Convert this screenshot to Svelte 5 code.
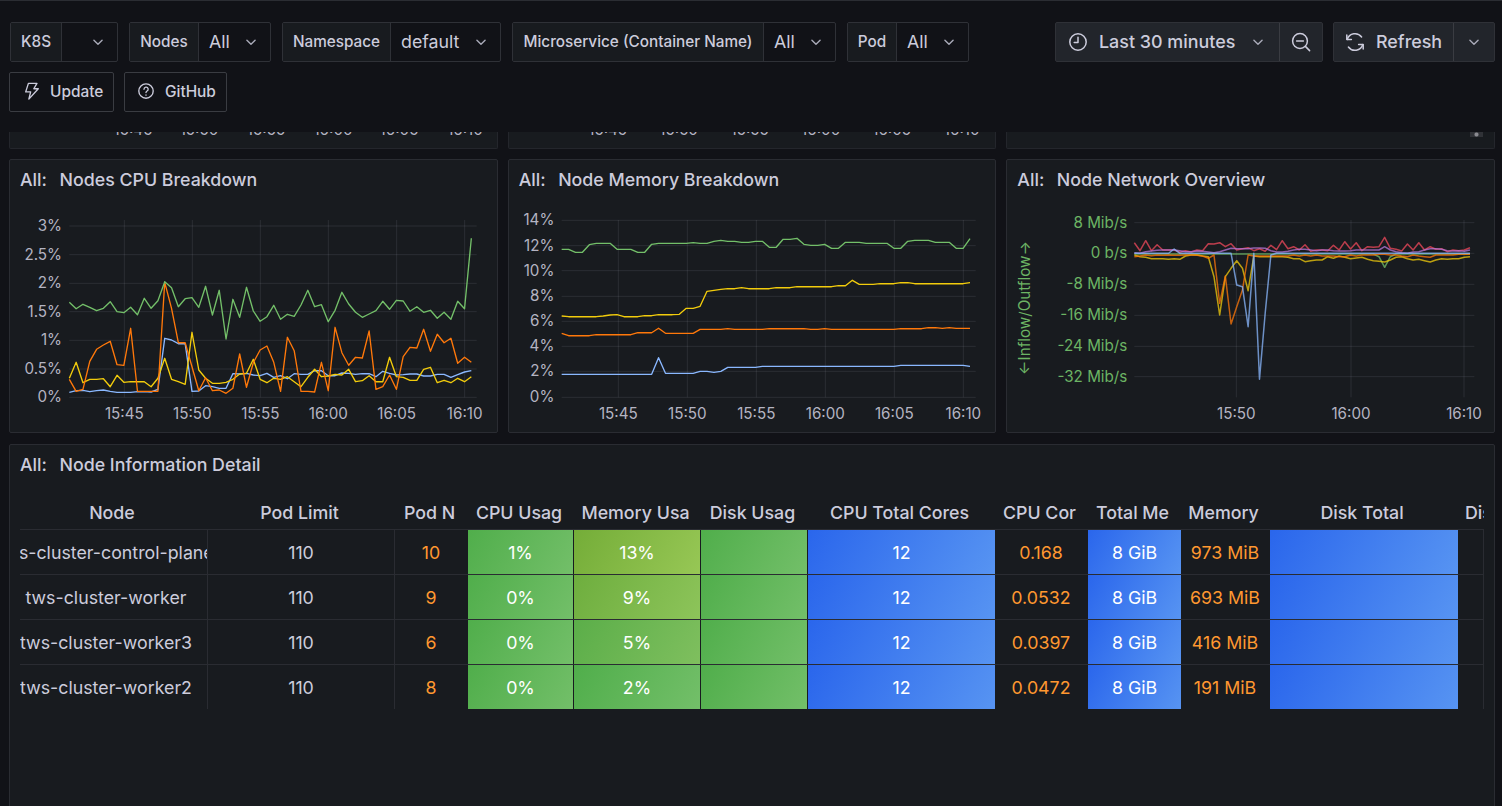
<script>
  // series are read off the reference in 3x crop coordinates, toLine maps them to svg space
  const toLine = (ys, x0, x1, ox) =>
    ys.map((y, i) => `${(x0 + (i * (x1 - x0)) / (ys.length - 1)) / 3 - ox},${(y / 3).toFixed(1)}`).join(' ');
  const rep = (v, n) => Array(n).fill(v);

  const variables = [
    { id: 'k8s', label: 'K8S', value: '' },
    { id: 'nodes', label: 'Nodes', value: 'All' },
    { id: 'ns', label: 'Namespace', value: 'default' },
    { id: 'micro', label: 'Microservice (Container Name)', value: 'All' },
    { id: 'pod', label: 'Pod', value: 'All' }
  ];

  const times = ['15:45', '15:50', '15:55', '16:00', '16:05', '16:10'];

  // chart 1
  const cpuGrid = [78, 164, 250, 335, 421, 507, 592];
  const cpuTicks = ['3%', '2.5%', '2%', '1.5%', '1%', '0.5%', '0%'];
  const cpuX = [373, 577, 781, 985, 1190, 1394];
  const cpuSeries = [
    { c: '#8ab8ff', y: [577,572,571,575,572,570,574,577,577,577,575,575,576,568,415,420,431,431,574,573,557,560,565,565,521,522,520,525,527,520,532,527,536,521,523,523,512,512,527,527,519,520,523,521,521,530,514,520,525,524,522,522,528,528,523,523,532,524,516,512] },
    { c: '#f2cc0c', y: [535,487,548,538,538,536,560,526,547,545,545,545,560,535,475,538,545,553,397,510,535,550,550,547,538,522,520,478,538,548,535,538,530,545,560,532,508,530,528,523,525,508,545,542,527,545,545,472,530,532,541,541,508,502,548,541,548,535,545,530] },
    { c: '#ff780a', y: [538,574,568,484,448,435,424,494,496,385,574,574,574,574,247,325,428,428,500,572,533,572,570,580,565,462,562,488,450,438,487,574,412,452,574,574,576,487,572,382,458,496,472,474,393,568,560,525,568,470,442,444,388,454,403,428,415,490,472,487] },
    { c: '#73bf69', y: [307,326,313,322,332,325,305,335,338,322,344,295,325,302,245,263,320,296,293,322,259,345,271,417,298,352,262,333,364,350,316,358,343,349,315,271,320,314,365,331,277,312,337,352,342,332,304,328,301,303,334,320,337,331,355,337,358,304,326,115] }
  ];

  // chart 2
  const memGrid = [61, 137, 212, 289, 364, 439, 514, 592];
  const memTicks = ['14%', '12%', '10%', '8%', '6%', '4%', '2%', '0%'];
  const memX = [340, 547, 754, 961, 1168, 1375];
  const memSeries = [
    { c: '#8ab8ff', y: [...rep(523, 14), 473, 520, 520, 520, 520, 520, 514, 514, 517, 514, ...rep(502, 5), ...rep(499, 20), ...rep(496, 10), 499] },
    { c: '#ff780a', y: [400,407,407,407,407,404,404,404,404,404,404,398,398,398,385,400,400,400,400,400,388,388,388,388,386,388,388,388,388,388,386,386,386,386,386,386,388,388,386,388,388,388,388,388,388,388,388,388,388,386,386,386,386,383,383,385,383,385,385,385] },
    { c: '#f2cc0c', y: [348,350,350,350,350,350,348,345,344,350,350,350,347,347,344,344,344,343,325,325,319,274,271,268,266,266,263,266,266,266,266,263,263,263,260,260,260,260,260,260,257,257,241,253,253,253,251,251,251,248,248,251,251,251,251,251,251,251,251,248] },
    { c: '#73bf69', y: [148,148,157,157,134,130,130,130,148,148,148,157,157,133,130,130,130,130,130,128,130,130,124,121,124,124,127,127,124,124,142,142,118,118,115,133,136,136,133,145,145,127,127,127,130,130,130,130,145,145,124,121,121,121,127,127,127,145,145,116] }
  ];

  // chart 3
  const netGrid = [68, 160, 253, 346, 439, 530];
  const netTicks = ['8 Mib/s', '0 b/s', '-8 Mib/s', '-16 Mib/s', '-24 Mib/s', '-32 Mib/s'];
  const netX = [694, 1038, 1377];
  const netTimes = ['15:50', '16:00', '16:10'];
  const netBlue = rep(160, 60);
  netBlue[7] = 147;
  netBlue[18] = 255; netBlue[19] = 260; netBlue[20] = 380; netBlue[22] = 538; netBlue[23] = 340; netBlue[24] = 165;
  const netGreen = rep(162, 60);
  netGreen[43] = 170; netGreen[44] = 202; netGreen[45] = 170;
  const netSeries = [
    { c: '#73bf69', y: netGreen },
    { c: '#f2cc0c', y: [165,170,172,176,176,176,178,176,178,168,165,165,168,170,230,345,230,205,182,205,272,168,170,170,170,170,170,172,176,176,185,182,180,180,170,175,168,172,176,174,172,178,182,184,186,180,172,170,176,180,178,182,186,180,176,178,176,176,172,170] },
    { c: '#ff780a', y: [170,168,165,167,165,166,165,166,166,165,165,166,168,175,165,310,228,372,320,270,165,168,168,168,168,168,168,168,165,168,165,168,165,168,168,168,170,170,165,168,165,165,165,163,163,165,165,168,170,165,168,170,172,165,165,165,165,163,163,163] },
    { c: '#f2495c', y: [128,152,122,152,134,150,150,150,157,152,156,150,152,131,132,128,140,131,150,146,143,152,146,154,136,149,122,146,140,150,134,154,150,150,152,136,150,125,147,128,152,140,142,140,112,145,148,153,132,150,128,150,140,148,146,155,150,152,150,143] },
    { c: '#b877d9', y: [158,160,155,153,151,150,150,150,152,155,155,153,154,156,158,155,150,145,146,146,146,144,144,145,152,156,156,154,150,148,148,150,152,150,150,152,153,153,152,150,150,150,150,150,140,150,155,158,160,156,155,150,146,146,148,152,153,152,154,150] },
    { c: '#8ab8ff', y: netBlue }
  ];

  const columns = [
    { key: 'node', title: 'Node', kind: 'text name' },
    { key: 'limit', title: 'Pod Limit', kind: 'text' },
    { key: 'num', title: 'Pod N', kind: 'warn' },
    { key: 'cpu', title: 'CPU Usag', kind: 'green' },
    { key: 'mem', title: 'Memory Usa', kind: 'green' },
    { key: 'disk', title: 'Disk Usag', kind: 'green' },
    { key: 'cores', title: 'CPU Total Cores', kind: 'blue' },
    { key: 'used', title: 'CPU Cor', kind: 'warn' },
    { key: 'total', title: 'Total Me', kind: 'blue' },
    { key: 'memUsed', title: 'Memory', kind: 'warn' },
    { key: 'diskTotal', title: 'Disk Total', kind: 'blue' },
    { key: 'last', title: 'Dis', kind: 'text' }
  ];

  const rows = [
    { node: 'tws-cluster-control-plane', limit: '110', num: '10', cpu: '1%', mem: '13%', tone: 'm13', cores: '12', used: '0.168', total: '8 GiB', memUsed: '973 MiB' },
    { node: 'tws-cluster-worker', limit: '110', num: '9', cpu: '0%', mem: '9%', tone: 'm9', cores: '12', used: '0.0532', total: '8 GiB', memUsed: '693 MiB' },
    { node: 'tws-cluster-worker3', limit: '110', num: '6', cpu: '0%', mem: '5%', tone: 'm5', cores: '12', used: '0.0397', total: '8 GiB', memUsed: '416 MiB' },
    { node: 'tws-cluster-worker2', limit: '110', num: '8', cpu: '0%', mem: '2%', tone: '', cores: '12', used: '0.0472', total: '8 GiB', memUsed: '191 MiB' }
  ];
</script>

{#snippet chevron()}
  <svg class="chev" viewBox="0 0 12 12"><path d="M2.500 4.500 6 8l3.500-3.500" /></svg>
{/snippet}

<div class="page">
  <header class="toolbar">
    <div class="bar-row">
      <div class="vars">
        {#each variables as v}
          <div class="var {v.id}">
            <span class="var-label">{v.label}</span>
            <span class="var-value"><span>{v.value}</span>{@render chevron()}</span>
          </div>
        {/each}
      </div>
      <div class="controls">
        <div class="btn-group">
          <div class="ctl time">
            <svg class="ico" viewBox="0 0 20 20"><circle cx="10" cy="10" r="8.200" /><path d="M10 5.200V10.400H6.200" /></svg>
            <span>Last 30 minutes</span>
            {@render chevron()}
          </div>
          <div class="ctl zoom">
            <svg class="ico" viewBox="0 0 20 20"><circle cx="9" cy="9" r="7.400" /><path d="M5.600 9h6.800M14.400 14.400 18.600 18.600" /></svg>
          </div>
        </div>
        <div class="btn-group">
          <div class="ctl refresh">
            <svg class="ico" viewBox="0 0 20 20"><path d="M1.800 3v4.600h4.600M18.200 17v-4.600h-4.600" /><path d="M2.200 7.400A8.200 8.200 0 0 1 16.600 5M17.800 12.600A8.200 8.200 0 0 1 3.400 15" /></svg>
            <span>Refresh</span>
          </div>
          <div class="ctl more">{@render chevron()}</div>
        </div>
      </div>
    </div>
    <div class="links">
      <div class="link update">
        <svg class="ico small" viewBox="0 0 20 20"><path d="M6 1.500h9.500l-3.500 6h5L6.500 19l2-8H3z" /></svg>
        <span>Update</span>
      </div>
      <div class="link github">
        <svg class="ico small" viewBox="0 0 20 20"><circle cx="10" cy="10" r="8" /><path d="M7.800 8a2.300 2.300 0 1 1 3.400 2c-.8.500-1.200.9-1.200 1.800M10 14.400v.2" /></svg>
        <span>GitHub</span>
      </div>
    </div>
  </header>

  <main class="board">
    <div class="clipped">
      <div class="stub first">
        {#each times as t}<span>{t}</span>{/each}
      </div>
      <div class="stub second">
        {#each times as t}<span>{t}</span>{/each}
      </div>
      <div class="stub third"><i class="handle"></i></div>
    </div>

    <div class="charts">
      <section class="panel">
        <h2><span class="scope">All:</span>Nodes CPU Breakdown</h2>
        <svg class="chart" viewBox="0 0 488 232">
          {#each cpuGrid as y, i}
            <line class="grid" x1={208 / 3 - 10} x2={1430 / 3 - 10} y1={y / 3} y2={y / 3} />
            <text class="tick" text-anchor="end" x={186 / 3 - 10} y={y / 3 + 5}>{cpuTicks[i]}</text>
          {/each}
          {#each cpuX as x, i}
            <line class="grid" x1={x / 3 - 10} x2={x / 3 - 10} y1="20" y2={592 / 3} />
            <text class="tick" text-anchor="middle" x={x / 3 - 10} y="219">{times[i]}</text>
          {/each}
          {#each cpuSeries as s}
            <polyline class="series" stroke={s.c} points={toLine(s.y, 208, 1414, 10)} />
          {/each}
        </svg>
      </section>

      <section class="panel">
        <h2><span class="scope">All:</span>Node Memory Breakdown</h2>
        <svg class="chart" viewBox="0 0 488 232">
          {#each memGrid as y, i}
            <line class="grid" x1={170 / 3 - 4} x2={1412 / 3 - 4} y1={y / 3} y2={y / 3} />
            <text class="tick" text-anchor="end" x={148 / 3 - 4} y={y / 3 + 5}>{memTicks[i]}</text>
          {/each}
          {#each memX as x, i}
            <line class="grid" x1={x / 3 - 4} x2={x / 3 - 4} y1="20" y2={592 / 3} />
            <text class="tick" text-anchor="middle" x={x / 3 - 4} y="219">{times[i]}</text>
          {/each}
          {#each memSeries as s}
            <polyline class="series" stroke={s.c} points={toLine(s.y, 170, 1395, 4)} />
          {/each}
        </svg>
      </section>

      <section class="panel">
        <h2><span class="scope">All:</span>Node Network Overview</h2>
        <svg class="chart" viewBox="0 0 488 232">
          <text class="tick axis" text-anchor="middle" transform="translate(23 108) rotate(-90)">←Inflow/Outflow→</text>
          {#each netGrid as y, i}
            <line class="grid" x1={388 / 3 - 2} x2={1408 / 3 - 2} y1={y / 3} y2={y / 3} />
            <text class="tick axis" text-anchor="end" x={367 / 3 - 2} y={y / 3 + 5}>{netTicks[i]}</text>
          {/each}
          {#each netX as x, i}
            <line class="grid" x1={x / 3 - 2} x2={x / 3 - 2} y1="20" y2={592 / 3} />
            <text class="tick" text-anchor="middle" x={x / 3 - 2} y="219">{netTimes[i]}</text>
          {/each}
          {#each netSeries as s}
            <polyline class="series faded" stroke={s.c} points={toLine(s.y, 388, 1395, 2)} />
          {/each}
        </svg>
      </section>
    </div>

    <section class="panel detail">
      <h2><span class="scope">All:</span>Node Information Detail</h2>
      <div class="table">
        <div class="tr head">
          {#each columns as col}
            <div class="th"><span>{col.title}</span></div>
          {/each}
        </div>
        {#each rows as row}
          <div class="tr">
            {#each columns as col}
              <div class="td {col.kind} {col.key === 'mem' ? row.tone : ''}">
                <span>{row[col.key] ?? ''}</span>
              </div>
            {/each}
          </div>
        {/each}
      </div>
    </section>
  </main>
</div>

<style>
  :global(body) {
    margin: 0;
    background: #111217;
  }

  .page {
    height: 806px;
    overflow: hidden;
    font-family: Inter, "Noto Sans", sans-serif;
    color: #ccccdc;
    background: #111217;
  }

  .toolbar {
    height: 132px;
    box-sizing: border-box;
    border-top: 1px solid #2b2d33;
    padding: 21px 7px 0 9px;
    background: #111217;
  }

  .bar-row {
    display: flex;
    justify-content: space-between;
  }

  .vars {
    display: flex;
    gap: 11px;
    margin-left: 1px;
  }

  .var {
    display: flex;
    height: 40px;
    box-sizing: border-box;
    border: 1px solid #2f3137;
    border-radius: 2px;
    font-size: 15.300px;
  }

  .var-label {
    display: flex;
    align-items: center;
    justify-content: center;
    padding-bottom: 1px;
    font-weight: 500;
    white-space: nowrap;
    background: #181b1f;
    border-right: 1px solid #2f3137;
  }

  .var-value {
    display: flex;
    align-items: center;
    justify-content: space-between;
    padding: 0 12px 1px 10px;
    font-size: 17.800px;
  }

  .k8s { width: 108px; }
  .k8s .var-label { width: 50px; }
  .k8s .var-value { flex: 1; }
  .nodes { width: 142px; }
  .nodes .var-label { width: 68px; }
  .nodes .var-value { flex: 1; }
  .ns { width: 219px; }
  .ns .var-label { width: 107px; }
  .ns .var-value { flex: 1; }
  .micro { width: 324px; }
  .micro .var-label { width: 250px; }
  .micro .var-value { flex: 1; }
  .pod { width: 122px; }
  .pod .var-label { width: 48px; }
  .pod .var-value { flex: 1; }

  .chev {
    width: 14px;
    height: 14px;
    flex: none;
    fill: none;
    stroke: #a9aab8;
    stroke-width: 1.200;
    stroke-linecap: round;
    stroke-linejoin: round;
  }

  .controls {
    display: flex;
    gap: 10px;
  }

  .btn-group {
    display: flex;
    height: 40px;
    box-sizing: border-box;
    border: 1px solid #2f3137;
    border-radius: 2px;
    background: #22252b;
    font-size: 17.900px;
    font-weight: 500;
  }

  .ctl {
    display: flex;
    align-items: center;
    box-sizing: border-box;
    padding-bottom: 1px;
  }

  .time {
    width: 224px;
    padding-left: 12px;
    padding-right: 14px;
    gap: 11px;
    border-right: 1px solid #3a3c42;
  }

  .time span { flex: 1; }

  .zoom {
    width: 42px;
    justify-content: center;
  }

  .refresh {
    width: 120px;
    padding-left: 11px;
    gap: 11px;
    border-right: 1px solid #3a3c42;
  }

  .more {
    width: 40px;
    justify-content: center;
  }

  .ico {
    width: 20px;
    height: 20px;
    flex: none;
    fill: none;
    stroke: #ccccdc;
    stroke-width: 1.500;
    stroke-linecap: round;
    stroke-linejoin: round;
  }

  .ico.small {
    width: 18px;
    height: 18px;
  }

  .links {
    display: flex;
    gap: 10px;
    margin-top: 10px;
  }

  .link {
    display: flex;
    align-items: center;
    height: 40px;
    box-sizing: border-box;
    border: 1px solid #3a3c42;
    border-radius: 2px;
    padding-bottom: 2px;
    font-size: 15.400px;
    font-weight: 500;
  }

  .update {
    width: 105px;
    padding-left: 13px;
    gap: 9px;
  }

  .github {
    width: 103px;
    padding-left: 12px;
    gap: 10px;
  }

  .board {
    padding: 0 7px 0 9px;
  }

  .clipped {
    display: grid;
    grid-template-columns: repeat(3, 1fr);
    gap: 10px;
    height: 17px;
    overflow: hidden;
  }

  .stub {
    position: relative;
    box-sizing: border-box;
    height: 17px;
    overflow: hidden;
    background: #181b1f;
    border: 1px solid #24262c;
    border-top: none;
    border-radius: 0 0 2px 2px;
  }

  .stub span {
    position: absolute;
    top: -12px;
    width: 40px;
    text-align: center;
    font-size: 15.200px;
    color: #b4b4c2;
  }

  .first span:nth-child(1) { left: 103px; }
  .first span:nth-child(2) { left: 169px; }
  .first span:nth-child(3) { left: 236px; }
  .first span:nth-child(4) { left: 303px; }
  .first span:nth-child(5) { left: 369px; }
  .first span:nth-child(6) { left: 435px; }
  .second span:nth-child(1) { left: 79px; }
  .second span:nth-child(2) { left: 150px; }
  .second span:nth-child(3) { left: 221px; }
  .second span:nth-child(4) { left: 292px; }
  .second span:nth-child(5) { left: 363px; }
  .second span:nth-child(6) { left: 433px; }

  .handle {
    position: absolute;
    top: 0;
    right: 11px;
    width: 13px;
    height: 5px;
    background: radial-gradient(circle, #8a8a90 1.500px, #303237 2.500px);
  }

  .charts {
    display: grid;
    grid-template-columns: repeat(3, 1fr);
    gap: 10px;
    margin-top: 10px;
  }

  .panel {
    box-sizing: border-box;
    background: #181b1f;
    border: 1px solid #2a2c32;
    border-radius: 2px;
    height: 274px;
    overflow: hidden;
  }

  h2 {
    margin: 0;
    height: 40px;
    box-sizing: border-box;
    padding: 10px 0 0 10px;
    font-size: 17.800px;
    line-height: 20px;
    font-weight: 500;
    color: #ccccdc;
  }

  .scope {
    display: inline-block;
    width: 39.500px;
  }

  .chart {
    display: block;
    width: 488px;
    height: 232px;
  }

  .grid {
    stroke: rgba(204, 204, 220, 0.11);
    stroke-width: 1;
  }

  .tick {
    fill: #b4b4c2;
    font-size: 15.200px;
    font-family: Inter, "Noto Sans", sans-serif;
  }

  .axis {
    fill: #6cb464;
  }

  .series {
    fill: none;
    stroke-width: 1.350;
    stroke-linejoin: round;
  }

  .faded {
    stroke-opacity: 0.75;
    stroke-width: 1.500;
  }

  .detail {
    height: 380px;
    margin-top: 11px;
  }

  .table {
    margin: 5px 0 0 10px;
    width: 1464px;
    overflow: hidden;
  }

  .tr {
    display: grid;
    grid-template-columns: 188px 187px 73px 106px 127px 107px 187px 93px 93px 89px 188px 26px;
    height: 45px;
    box-sizing: border-box;
    border-bottom: 1px solid #2a2c32;
    font-size: 17.800px;
  }

  .tr:last-child {
    border-bottom: none;
    height: 44px;
  }

  .tr.head {
    height: 40px;
    padding-top: 6px;
    align-items: center;
    font-weight: 500;
  }

  .th {
    display: flex;
    justify-content: center;
    padding-right: 4px;
    overflow: hidden;
    white-space: nowrap;
  }

  .th:last-child {
    justify-content: flex-start;
    padding: 0 0 0 7px;
  }

  .td {
    display: flex;
    align-items: center;
    justify-content: center;
    overflow: hidden;
    white-space: nowrap;
    box-sizing: border-box;
    border-right: 1px solid #2a2c32;
  }

  .td span {
    flex: none;
  }

  .name {
    padding-right: 15px;
  }

  .warn {
    color: #ff9830;
    border-right-color: transparent;
  }

  .green {
    color: #fff;
    border-right: 1px solid #181b1f;
    background: linear-gradient(120deg, #50ae4b, #73bf69);
  }

  .blue {
    color: #fff;
    border-right: none;
    background: linear-gradient(120deg, #2a66ec, #5794f2);
  }

  .m13 { background: linear-gradient(120deg, #74ad38, #97c755); }
  .m9 { background: linear-gradient(120deg, #6eae3e, #8dc45a); }
  .m5 { background: linear-gradient(120deg, #5bae49, #7fbf5e); }
</style>
